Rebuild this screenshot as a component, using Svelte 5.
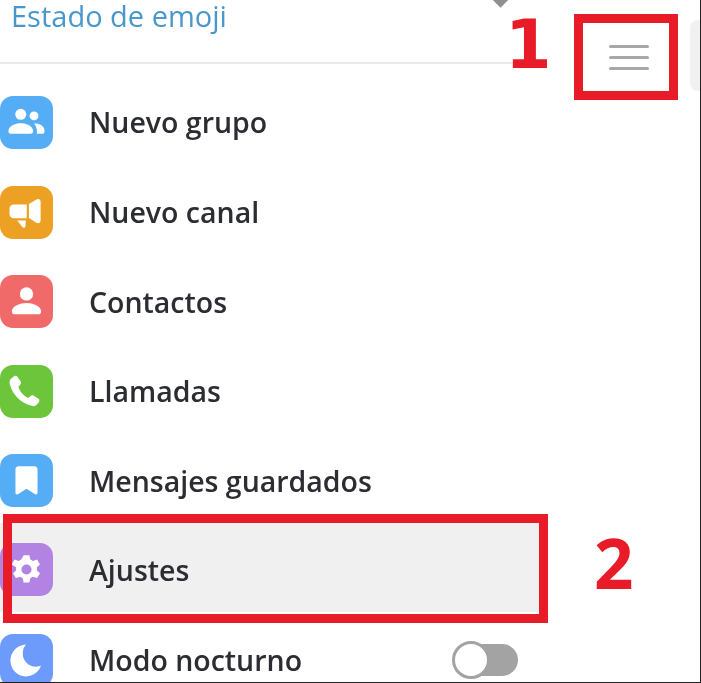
<script>
	// Side menu items, top to bottom
	const items = [
		{ label: 'Nuevo grupo', color: '#55aef5', icon: 'group' },
		{ label: 'Nuevo canal', color: '#eca024', icon: 'channel' },
		{ label: 'Contactos', color: '#f06a6a', icon: 'contact' },
		{ label: 'Llamadas', color: '#6cc53a', icon: 'call' },
		{ label: 'Mensajes guardados', color: '#55aef5', icon: 'saved' },
		{ label: 'Ajustes', color: '#b283e2', icon: 'settings', active: true },
		{ label: 'Modo nocturno', color: '#6c9bfb', icon: 'moon', toggle: true }
	];
</script>

<div class="page">
	<header class="status">
		<span class="status-text">Estado de emoji</span>
	</header>

	<ul class="menu">
		{#each items as item}
			<li class="row" class:active={item.active}>
				<span class="icon" style="background: {item.color}">
					<svg viewBox="0 0 24 24" width="53" height="53" fill="#fff">
						{#if item.icon === 'group'}
							<circle cx="9.4" cy="8.300" r="2.500" />
							<circle cx="15.400" cy="9" r="2" />
							<path d="M3.800 16c0-2.500 3-3.700 5.600-3.700s5.600 1.200 5.600 3.700c0 .7-.4 1.100-1.100 1.100H4.900c-.7 0-1.100-.4-1.100-1.100z" />
							<path d="M15.400 12.500c2.300-.2 4.800 1 4.800 3.300 0 .9-.5 1.300-1.200 1.300h-2.300c.2-1.800-.2-3.300-1.300-4.600z" />
						{:else if item.icon === 'channel'}
							<path d="M16.300 6.200c1.100-.7 2.100-.2 2.100 1v8.300c0 1.200-1 1.700-2.100 1l-3.200-2V8.200z" />
							<path d="M6.200 8.400h5.900v6.200H6.200c-1 0-1.900-.8-1.900-1.800v-2.600c0-1 .9-1.800 1.900-1.800z" />
							<path d="M7.800 15.600h3.900l-.2 2.600c-.1.800-.9 1-1.400.4z" />
						{:else if item.icon === 'contact'}
							<circle cx="12" cy="8.600" r="3" />
							<path d="M5.400 16.500c0-2.500 3.800-3.800 6.600-3.800s6.600 1.300 6.600 3.800c0 .9-.5 1.300-1.300 1.300H6.700c-.8 0-1.300-.4-1.300-1.300z" />
						{:else if item.icon === 'call'}
							<path d="M6.200 5.200c.6-.5 1.400-.4 1.800.2l1.300 2c.3.5.3 1.100-.1 1.500l-.9 1c.9 2.400 2.200 4 4.500 5l1-.9c.4-.4 1-.4 1.500-.1l2 1.300c.6.4.7 1.200.2 1.800l-.8.9c-.6.7-1.500.9-2.400.6-5-1.300-8.700-5-9.900-10-.2-.9 0-1.700.6-2.300z" />
						{:else if item.icon === 'saved'}
							<path d="M8.400 5.600h7.200c.9 0 1.400.6 1.400 1.400v10.600c0 .6-.6.900-1.100.6L12 15.700l-3.900 2.500c-.5.300-1.100 0-1.100-.6V7c0-.8.500-1.400 1.400-1.400z" />
						{:else if item.icon === 'settings'}
							<path fill-rule="evenodd" d="M10.700 5.500h2.600l.4 1.900 1.200.7 1.900-.6 1.300 2.200-1.400 1.300v1.400l1.400 1.300-1.300 2.200-1.900-.6-1.200.7-.4 1.900h-2.600l-.4-1.900-1.200-.7-1.900.6-1.300-2.200 1.400-1.300v-1.400L5.300 9.700l1.300-2.200 1.900.6 1.200-.7zM12 9.700a2.300 2.300 0 1 0 0 4.600 2.300 2.300 0 0 0 0-4.600z" />
						{:else if item.icon === 'moon'}
							<path d="M11.800 4.800c-1 1.100-1.500 2.500-1.500 4 0 3.300 2.700 6 6 6 1 0 1.600-.2 2.300-.5-1 2.900-3.600 4.900-6.800 4.900-3.900 0-7.100-3.200-7.100-7.100 0-3.900 3-7 7.100-7.300z" />
						{/if}
					</svg>
				</span>
				<span class="label">{item.label}</span>
				{#if item.toggle}
					<span class="toggle"><span class="knob"></span></span>
				{/if}
			</li>
		{/each}
	</ul>

	<!-- stuff peeking in around the menu -->
	<span class="diamond"></span>
	<span class="next-panel"></span>

	<div class="burger">
		<span></span>
		<span></span>
		<span></span>
	</div>

	<!-- red annotations -->
	<div class="mark mark-burger"></div>
	<div class="mark mark-settings"></div>
	<span class="num num-1">1</span>
	<span class="num num-2">2</span>
</div>

<style>
	:global(body) {
		margin: 0;
		background: #fff;
	}

	.page {
		position: relative;
		box-sizing: border-box;
		width: 701px;
		height: 683px;
		overflow: hidden;
		background: #fff;
		border-right: 1px solid #222;
		border-bottom: 1px solid #222;
		font-family: 'Open Sans', sans-serif;
		/* the reference is a soft, upscaled capture */
		filter: blur(0.4px);
	}

	.status {
		box-sizing: border-box;
		width: 515px;
		height: 64px;
		padding-left: 11px;
		border-bottom: 2px solid #ebebeb;
	}

	.status-text {
		display: block;
		font-size: 29px;
		line-height: 32px;
		color: #4a98cb;
	}

	.menu {
		width: 540px;
		margin: 0;
		padding: 13.7px 0 0;
		list-style: none;
	}

	.row {
		box-sizing: border-box;
		display: flex;
		align-items: center;
		gap: 36px;
		height: 89.6px;
	}

	.row.active {
		margin: -3px 0 3px;
		padding-top: 5px;
		background: #f0f0f0;
	}

	.icon {
		flex: none;
		display: flex;
		width: 53px;
		height: 53px;
		border-radius: 13px;
	}

	.label {
		font-size: 28.5px;
		font-weight: 600;
		color: #2b2d33;
		white-space: nowrap;
	}

	.toggle {
		position: relative;
		width: 62px;
		height: 32px;
		margin-left: auto;
		margin-right: 22px;
		border-radius: 16px;
		background: #a3a3a3;
	}

	.knob {
		position: absolute;
		top: -3px;
		left: -4px;
		box-sizing: border-box;
		width: 38px;
		height: 38px;
		border: 3px solid #a3a3a3;
		border-radius: 50%;
		background: #fff;
	}

	.diamond {
		position: absolute;
		top: -8px;
		left: 494px;
		width: 13px;
		height: 13px;
		background: #8f8f8f;
		transform: rotate(45deg);
	}

	.next-panel {
		position: absolute;
		top: 20px;
		left: 690px;
		width: 30px;
		height: 71px;
		border-radius: 8px;
		background: #f1f1f1;
	}

	.burger {
		position: absolute;
		top: 45px;
		left: 609px;
		display: flex;
		flex-direction: column;
		gap: 8px;
		width: 40px;
	}

	.burger span {
		height: 3px;
		border-radius: 2px;
		background: #a8a8a8;
	}

	.mark {
		position: absolute;
		box-sizing: border-box;
		border: 9px solid #e81c28;
	}

	.mark-burger {
		top: 14px;
		left: 574px;
		width: 104px;
		height: 86px;
	}

	.mark-settings {
		top: 514px;
		left: 3px;
		width: 545px;
		height: 109px;
	}

	.num {
		position: absolute;
		font-size: 69px;
		font-weight: 700;
		line-height: 1;
		color: #e81c28;
	}

	.num-1 {
		top: 12px;
		left: 505px;
		font-family: 'DejaVu Sans', sans-serif;
		font-size: 67px;
	}

	.num-2 {
		top: 528px;
		left: 594px;
	}
</style>
